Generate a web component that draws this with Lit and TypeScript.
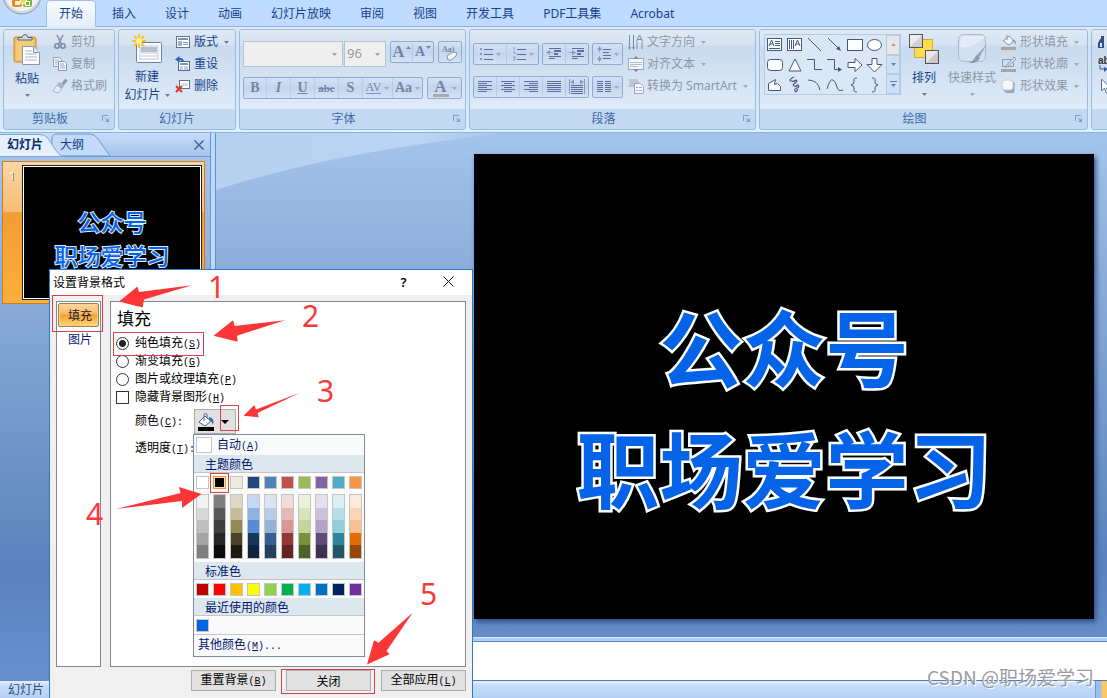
import { LitElement, html, svg, css, nothing, type TemplateResult } from "lit";
import { customElement, state } from "lit/decorators.js";
import { classMap } from "lit/directives/class-map.js";
import { styleMap } from "lit/directives/style-map.js";

const icon = (w: number, h: number, body: unknown) =>
  html`<svg class="ic" width=${w} height=${h} viewBox="0 0 ${w} ${h}" fill="none" aria-hidden="true">${body}</svg>`;

const caret = html`<svg class="caret" width="5" height="3" viewBox="0 0 5 3" aria-hidden="true"><path d="M0 0h5L2.5 3z" fill="currentColor" /></svg>`;

const lines = (xs: number[][], color = "#5b6f9b") =>
  xs.map(([x, y, w]) => svg`<rect x=${x} y=${y} width=${w} height="1" fill=${color} />`);

const I = {
  paste: icon(30, 32, svg`
    <rect x="2" y="3" width="22" height="25" rx="2" fill="#f0bd5e" stroke="#c48a35"/>
    <rect x="4" y="6" width="18" height="20" fill="#f8d68c" opacity=".6"/>
    <path d="M6 6V3.500h4Q10.500 .6 13 .6t3 2.900h4V6z" fill="#d5d9e0" stroke="#59606e"/>
    <path d="M10.500 12.500h11l6 6v12h-17z" fill="#fff" stroke="#8796ad"/>
    <path d="M21.500 12.500v6h6" fill="#dfe7f2" stroke="#8796ad"/>
    <path d="M13 17h7M13 20h12M13 23h12M13 26h12" stroke="#a9b6cb"/>`),
  cut: icon(16, 16, svg`
    <path d="M5 1l4.500 9M11 1L6.500 10" stroke="#8794ab" stroke-width="1.600"/>
    <circle cx="5" cy="12" r="2.200" stroke="#7788a8" stroke-width="1.500"/><circle cx="11" cy="12" r="2.200" stroke="#7788a8" stroke-width="1.500"/>`),
  copy: icon(16, 16, svg`
    <path d="M1.500 1.500h6l2 2v7h-8z" fill="#eef3fa" stroke="#97a6bf"/><path d="M3 4h4M3 6h5M3 8h5" stroke="#aab7cc"/>
    <path d="M6.500 5.500h6l2 2v7h-8z" fill="#f6f9fd" stroke="#8495b2"/><path d="M8 8h4M8 10h5M8 12h5" stroke="#97a6bf"/>`),
  brush: icon(16, 16, svg`
    <path d="M14.500 1.500l-4 5" stroke="#8a99b3" stroke-width="3"/>
    <path d="M7 4l5 4-2 3L5 7z" fill="#a7b4c9"/><path d="M5 7L9.500 11 6 15 1 13z" fill="#e8edf4" stroke="#a8b4c8"/>`),
  newSlide: icon(32, 30, svg`
    <rect x="5.500" y="8.500" width="25" height="20" rx="1" fill="#fbfcfe" stroke="#6d7f9c"/>
    <rect x="8" y="11" width="20" height="15" fill="#dfe4ec"/><rect x="10" y="13" width="16" height="5" fill="#b5bfce"/>
    <path d="M10 20.500h16M10 23.500h16" stroke="#fff"/>
    <path d="M8 0v14M1 7h14M3 2l10 10M13 2L3 12" stroke="#f4c51c" stroke-width="1.800"/><circle cx="8" cy="7" r="3" fill="#fff3a0"/>`),
  layout: icon(16, 16, svg`
    <rect x="1.500" y="2.500" width="13" height="11" fill="#fff" stroke="#5f7494"/><rect x="3" y="4" width="10" height="2" fill="#7f93b3"/>
    <rect x="3" y="7" width="4" height="5" fill="#9fb0c9"/><path d="M8 8.500h5M8 10.500h5" stroke="#7f93b3"/>`),
  reset: icon(16, 16, svg`
    <rect x="3.500" y="5.500" width="11" height="9" fill="#fff" stroke="#4f678f"/><rect x="5" y="7" width="8" height="2" fill="#7f93b3"/>
    <path d="M5 11h3M9 11h4M5 13h3M9 13h4" stroke="#8fa1be"/>
    <path d="M8 5.500Q7.500 2.500 4 3" stroke="#2d62b8" stroke-width="2"/><path d="M0 3.500L4.500 0v6.500z" fill="#2d62b8"/>`),
  remove: icon(16, 16, svg`
    <rect x="4.500" y="2.500" width="10" height="8" fill="#fff" stroke="#5f7494"/><rect x="7" y="5" width="6" height="3" fill="#d5dce8"/>
    <path d="M1 8l6 6M7 8l-6 6" stroke="#dd3a26" stroke-width="2"/>`),
  eraser: icon(18, 18, svg`
    <text x="1" y="9" font-size="8" font-weight="700" fill="#7684a3" font-family="Liberation Serif">Aa)</text>
    <path d="M6 13l6-4 4 1-1 3-5 4H7z" fill="#f2f5fa" stroke="#8492ac"/>`),
  bullets: icon(14, 14, svg`<path d="M1 1h2v2H1zM1 6h2v2H1zM1 11h2v2H1z" fill="#8b9ab8"/>${lines([[5, 2, 9], [5, 7, 9], [5, 12, 9]])}`),
  numbers: icon(14, 14, svg`<path d="M2 0v3M1 5h2v2M1 10h2v3H1" stroke="#8b9ab8"/>${lines([[5, 2, 9], [5, 7, 9], [5, 12, 9]])}`),
  outdent: icon(16, 14, svg`${lines([[3, 1, 12], [8, 3, 7], [8, 4, 7], [8, 6, 4], [8, 7, 4], [3, 9, 12], [3, 11, 6]])}<path d="M0 5.500L4 3v5zM4 5h3v1H4z" fill="#8c9fc4"/>`),
  indent: icon(16, 14, svg`${lines([[3, 1, 12], [8, 3, 7], [8, 4, 7], [8, 6, 4], [8, 7, 4], [3, 9, 12], [3, 11, 6]])}<path d="M7 5.500L3 3v5zM0 5h3v1H0z" fill="#8c9fc4"/>`),
  spacing: icon(14, 16, svg`<path d="M2.500 1v5M2.500 10v5" stroke="#8b9ab8"/><path d="M0 4l2.500-4L5 4zM0 12l2.500 4L5 12z" fill="#8b9ab8"/>${lines([[6, 3, 8], [6, 6, 6], [6, 9, 8], [6, 12, 8]])}`),
  left: icon(16, 14, lines([[1, 1, 14], [1, 3, 9], [1, 5, 14], [1, 7, 9], [1, 9, 14], [1, 11, 9]])),
  center: icon(16, 14, lines([[1, 1, 14], [4, 3, 8], [1, 5, 14], [4, 7, 8], [1, 9, 14], [4, 11, 8]])),
  right: icon(16, 14, lines([[1, 1, 14], [6, 3, 9], [1, 5, 14], [6, 7, 9], [1, 9, 14], [6, 11, 9]])),
  justify: icon(16, 14, lines([[1, 1, 14], [1, 3, 14], [1, 5, 14], [1, 7, 14], [1, 9, 14], [1, 11, 14]])),
  distribute: icon(16, 16, svg`<path d="M.5 0v15M15.500 0v15" stroke="#8b9ab8"/><path d="M1 3l4-2.500v5zM15 3l-4-2.500v5z" fill="#8b9ab8"/>${lines([[2, 6, 12], [2, 8, 12], [2, 10, 12], [2, 12, 12], [2, 14, 12]])}`),
  columns: icon(14, 14, lines([[0, 1, 6], [0, 3, 6], [0, 5, 6], [0, 7, 6], [0, 9, 6], [0, 11, 6], [8, 1, 6], [8, 3, 6], [8, 5, 6], [8, 7, 6], [8, 9, 6], [8, 11, 6]])),
  direction: icon(16, 16, svg`<path d="M1.500 1v14M5.500 1v14M9 8.500V15M14 8.500V15" stroke="#7b8aa9"/><path d="M0 13h3l-1.500 3zM4 13h3l-1.500 3z" fill="#7b8aa9"/>
    <path d="M8.500 7.500L11.500 1l3 6.500M9.500 5.500h4" stroke="#7b8aa9"/>`),
  align: icon(16, 16, svg`<rect x=".5" y="2.500" width="15" height="11" fill="#f4f7fc" stroke="#9aa8bf"/><path d="M2 6.500h12M2 8.500h12M2 10.500h8" stroke="#b2bdd0"/><path d="M8 0l3 3H5zM8 16l3-3H5z" fill="#7b8aa9"/>`),
  smart: icon(16, 16, svg`<path d="M0 1h9l3 4-3 4H0l2-4z" fill="#bcc6d5"/><path d="M6.500 5.500h6l3 3v7h-9z" fill="#f4f7fc" stroke="#9aa8bf"/><path d="M8 9.500h2M11 9.500h3M8 12.500h2M11 12.500h3" stroke="#97a6bf"/>`),
  arrange: icon(32, 32, svg`
    <rect x="6.500" y="6.500" width="18" height="18" fill="#ffdc4e" stroke="#d9ab32"/>
    <rect x="1.500" y="1.500" width="13" height="13" fill="#d0d0d0" stroke="#555"/><path d="M2 2h12L2 14z" fill="#ececec"/>
    <rect x="17.500" y="17.500" width="13" height="13" fill="#cacaca" stroke="#555"/><path d="M18 18h12L18 30z" fill="#e8e8e8"/>`),
  quick: icon(32, 32, svg`
    <rect x="2.500" y="1.500" width="27" height="27" rx="5" fill="#d3e0f0" stroke="#a9b9d0"/><path d="M4 14Q16 16 28 5V3H5z" fill="#e3ecf7"/>
    <path d="M31 11L20 23l3 2z" fill="#9aa8be"/><path d="M20 22l4 3q-3 6-11 5 5-2 7-8z" fill="#8d9bb3"/>`),
  fill: icon(18, 16, svg`<path d="M3 7l6-5 5 5-5 4z" fill="#f3f6fb" stroke="#8896b0"/><path d="M7 6V1" stroke="#8896b0"/><path d="M12 5q5 1 4 6-1-3-4-4z" fill="#8ba0c6"/><rect x="1" y="13" width="15" height="3" fill="#a6a6a6"/>`),
  outline: icon(18, 16, svg`<path d="M2.500 3.500h9M2.500 3.500v7h11v-4" stroke="#8896b0"/><path d="M5 11L14 1l2 2-9 8z" fill="#d9e1ee" stroke="#8896b0"/><rect x="1" y="13" width="15" height="3" fill="#a6a6a6"/>`),
  effect: icon(18, 16, svg`<path d="M3 12l3 3h8l1-9-2-3z" fill="#98a8c4"/><rect x="2" y="2" width="11" height="10" rx="3" fill="#f4f7fc" stroke="#c1ccdd"/>`),
  bucket: icon(18, 18, svg`<path d="M2 9l6-6 6 5-6 5z" fill="#fff" stroke="#4a5f80"/><path d="M7 8V1.500q0-1 1.500-1T10 2v3" stroke="#5b7091"/><path d="M12 4q6 1 4 8-1-4-4-5z" fill="#3a68b5"/><rect x="1" y="14" width="16" height="4" fill="#000"/>`),
  launch: html`<svg width="8" height="8" viewBox="0 0 8 8" fill="none" aria-hidden="true"><path d="M.5 6V.5H6M3 3l3 3" stroke="#7f9cc8"/><path d="M7 3v4H3z" fill="#7f9cc8"/></svg>`,
};

const st = "#42597f";
const SHAPES: [string, TemplateResult][] = [
  ["文本框", svg`<rect x="1.500" y="2.500" width="14" height="12" fill="#fff" stroke=${st}/><path d="M3 10l2.500-6L8 10M4 8h3M9 5.500h5M9 7.500h5M9 9.500h5M3 12.500h11" stroke=${st}/>`],
  ["竖排文本框", svg`<rect x="1.500" y="2.500" width="14" height="12" fill="#fff" stroke=${st}/><path d="M3.500 4v9M5.500 4v9M7.500 4v9M9 10l2.500-6L14 10M10 8h3" stroke=${st}/>`],
  ["直线", svg`<path d="M2 2l13 13" stroke=${st}/>`],
  ["箭头", svg`<path d="M2 2l11 11" stroke=${st}/><path d="M15 15l-5-2 3-3z" fill=${st}/>`],
  ["矩形", svg`<rect x="1.500" y="3.500" width="15" height="11" fill="#fff" stroke=${st}/>`],
  ["椭圆", svg`<ellipse cx="8.500" cy="9" rx="7" ry="5.500" fill="#fff" stroke=${st}/>`],
  ["圆角矩形", svg`<rect x="1.500" y="3.500" width="15" height="11" rx="3" fill="#fff" stroke=${st}/>`],
  ["三角形", svg`<path d="M9 3l6 12H3z" fill="#fff" stroke=${st}/>`],
  ["肘形连接符", svg`<path d="M1 3.500h7.500v10H16" stroke=${st}/>`],
  ["肘形箭头", svg`<path d="M1 3.500h7.500v10H13" stroke=${st}/><path d="M16 13.500L12 11v5z" fill=${st}/>`],
  ["右箭头", svg`<path d="M2 6.500h7v-4l7 6.500-7 6.500v-4H2z" fill="#fff" stroke=${st}/>`],
  ["下箭头", svg`<path d="M6 2.500h5v6h5L8.500 16 1 8.500h5z" fill="#fff" stroke=${st}/>`],
  ["任意多边形", svg`<path d="M2.500 14.500v-7l7-4-1 5 3-1 3 3v4z" fill="#fff" stroke=${st}/>`],
  ["自由曲线", svg`<path d="M8 1q-6 3-3 4t5-1q2 1-1 3t-1 3 4-1q2 2-1 3t-2 3 3-2" stroke=${st} stroke-width="1.200"/>`],
  ["弧形", svg`<path d="M2 4q10 0 12 10" stroke=${st}/>`],
  ["曲线", svg`<path d="M1 13Q4 2 7 4t4 7 6 3" stroke=${st}/>`],
  ["左大括号", svg`<path d="M11 2Q7 2 8 5t-3 4q4 1 3 4t3 3" stroke=${st}/>`],
  ["右大括号", svg`<path d="M6 2q4 0 3 3t3 4q-4 1-3 4t-3 3" stroke=${st}/>`],
];

const THEME: string[][] = [
  ["#ffffff", "#f2f2f2", "#d8d8d8", "#bfbfbf", "#a5a5a5", "#7f7f7f"],
  ["#000000", "#7f7f7f", "#595959", "#3f3f3f", "#262626", "#0c0c0c"],
  ["#eeece1", "#ddd9c3", "#c4bd97", "#938953", "#494429", "#1d1b10"],
  ["#1f497d", "#c6d9f0", "#8db3e2", "#548dd4", "#17365d", "#0f243e"],
  ["#4f81bd", "#dbe5f1", "#b8cce4", "#95b3d7", "#366092", "#244061"],
  ["#c0504d", "#f2dcdb", "#e5b9b7", "#d99694", "#953734", "#632423"],
  ["#9bbb59", "#ebf1dd", "#d7e3bc", "#c3d69b", "#76923c", "#4f6128"],
  ["#8064a2", "#e5e0ec", "#ccc1d9", "#b2a2c7", "#5f497a", "#3f3151"],
  ["#4bacc6", "#dbeef3", "#b7dde8", "#92cddc", "#31859b", "#205867"],
  ["#f79646", "#fdeada", "#fbd5b5", "#fac08f", "#e36c09", "#974806"],
];
const STANDARD = ["#c00000", "#ff0000", "#ffc000", "#ffff00", "#92d050", "#00b050", "#00b0f0", "#0070c0", "#002060", "#7030a0"];

const base = css`
  * { box-sizing: border-box; }
  button, select, input { font: inherit; color: inherit; margin: 0; }
  button { border: 0; padding: 0; background: none; text-align: center; white-space: nowrap; }
  svg { display: block; flex: none; }
`;

@customElement("ribbon-bar")
export class RibbonBar extends LitElement {
  static styles = [base, css`
    :host { display: block; font: 12px/16px "Noto Sans", "Noto Sans CJK SC", sans-serif; color: #15428b; }
    .top { display: flex; height: 27px; background: #bfdbff; border-bottom: 1px solid #8db2e3; }
    .orb { width: 47px; height: 26px; overflow: hidden; }
    .tabs { display: flex; gap: 5px; padding-top: 1px; }
    .tab { height: 25px; padding: 0 12px; }
    .tab.on { height: 26px; background: linear-gradient(#f7fbff, #e3eefb); border-radius: 4px 4px 0 0; box-shadow: 0 0 0 1px #9dbfe8; clip-path: inset(-1px -1px 0 -1px); }
    .ribbon { display: flex; gap: 3px; padding: 2px 0 2px 3px; overflow: hidden; background: linear-gradient(#dbe9f9, #cfe2f8 20%, #d8ebfa 90%, #d9f4ff); border-bottom: 1px solid #8fb3de; }
    .group { display: flex; flex-direction: column; flex: none; border: 1px solid #9dbcdd; border-radius: 3px; background: #c2d9f1; overflow: hidden; }
    .g1 { width: 112px; } .g2 { width: 118px; } .g3 { width: 227px; } .g4 { width: 287px; } .g5 { width: 329px; } .g6 { width: 120px; }
    .body { display: flex; height: 79px; background: linear-gradient(#dfe9f5, #d5e2f2 15px, #c9daee 16px, #dce8f6 70px, #e0ebf8); }
    .title { display: flex; align-items: center; height: 20px; color: #3e6aaa; }
    .title span { flex: 1; text-align: center; }
    .launch { width: 18px; height: 16px; padding-left: 6px; }
    .caret { color: #66809f; }
    .big { display: flex; flex-direction: column; align-items: center; }
    .big .lab { line-height: 18px; margin-top: 4px; }
    .big .caret { margin-top: 6px; }
    .g1 .big { width: 46px; padding-top: 4px; }
    .g2 .big { width: 56px; padding-top: 4px; }
    .inl { display: inline-flex; align-items: center; gap: 4px; }
    .big .inl .caret { margin-top: 0; }
    .col { display: flex; flex-direction: column; padding-top: 1px; }
    .cmd { display: flex; align-items: center; height: 22px; gap: 3px; }
    .cmd .caret { margin-left: 3px; }
    .g1 .cmd { margin-left: 2px; }
    .off { color: #8d96a6; }
    .off .caret, .box .caret { color: #9ba9bf; }
    .rows { display: flex; flex-direction: column; padding-left: 3px; }
    .g3 .rows { padding-top: 11px; gap: 10px; }
    .g4 .rows { padding-top: 13px; gap: 11px; }
    .row { display: flex; gap: 3px; }
    .g3 .row { gap: 4px; }
    .combos { display: flex; gap: 1px; height: 26px; }
    .combo { position: relative; display: flex; }
    select { appearance: none; height: 26px; border: 1px solid #b4c4d8; border-radius: 0; background: #efefef; color: #9a9a9a; padding: 0 0 2px 2px; font-size: 13px; opacity: 1; }
    .name { width: 100px; } .size { width: 42px; }
    .combo .caret { position: absolute; right: 6px; top: 12px; color: #9aa3b2; }
    .box { display: flex; height: 22px; border: 1px solid #8eabd0; border-radius: 2px; background: linear-gradient(#d3e1f4, #c4d5ee 50%, #d4e2f5); }
    .box button { display: flex; align-items: center; justify-content: center; gap: 3px; width: 24px; color: #7684a3; border-left: 1px solid #b7cbe5; }
    .box button:first-child { border-left: 0; width: 22px; }
    .g4 .box button { width: 23px; }
    .g4 .box button:first-child { width: 22px; }
    .box.pair button { width: 21px; gap: 1px; }
    .box .wide { width: 30px; }
    .g3 .box.w33 button { width: 33px; }
    .g4 .box.w33 button, .g4 .box.w33 button:first-child { width: 32px; }
    .g4 .box.w31 button:first-child { width: 29px; }
    .serif { font: bold 14px/18px "Liberation Serif", serif; }
    .serif.strike { font-size: 11px; text-decoration: line-through; }
    .serif.it { font-style: italic; } .serif.un { text-decoration: underline; }
    .serif.sp { font: 12px/11px "Liberation Serif", serif; border-bottom: 1px solid #7f95bf; }
    .serif.xl { font-size: 17px; }
    .bar { width: 16px; border-bottom: 3px solid #a9a9a9; line-height: 15px; }
    .g4 .col { margin-left: 5px; }
    .gal { display: flex; margin: 4px 0 0 4px; width: 137px; height: 61px; border: 1px solid #b5cae5; background: #dbe7f5; }
    .cells { display: grid; grid-template-columns: repeat(6, 20px); grid-auto-rows: 20px; flex: 1; }
    .cells button { display: grid; place-items: center; }
    .scroll { display: flex; flex-direction: column; width: 14px; }
    .scroll button { flex: 1; display: grid; place-items: center; border: 1px solid #b5cae5; background: #cfe0f5; color: #5a7cae; }
    .scroll button:first-child { background: #e8e6e6; color: #a3a3a3; }
    .g5 .big { width: 46px; padding-top: 3px; }
    .g5 .big.q { width: 50px; }
    .g5 .col { margin-left: 3px; }
    .g5 .cmd { gap: 2px; }
    .g5 .cmd .caret { margin-left: 4px; }
    .g6 .col { padding-left: 6px; }
  `];

  private title(text: string, launch = true) {
    return html`<div class="title"><span>${text}</span>${launch ? html`<button class="launch" aria-label="${text}选项">${I.launch}</button>` : nothing}</div>`;
  }

  private cmd(ic: unknown, text: string, off = false, drop = false) {
    return html`<button class=${classMap({ cmd: true, off })}>${ic}<span>${text}</span>${drop ? caret : nothing}</button>`;
  }

  render() {
    const tabs = ["开始", "插入", "设计", "动画", "幻灯片放映", "审阅", "视图", "开发工具", "PDF工具集", "Acrobat"];
    return html`
      <div class="top">
        <div class="orb"><svg width="44" height="16" viewBox="0 0 44 16" fill="none">
          <circle cx="22" cy="-5" r="19" fill="#cfd5de" stroke="#8a97ab"/><circle cx="22" cy="-6" r="17" fill="#f1f3f6"/>
          <rect x="12" y="-6" width="10" height="13" rx="2" fill="#ef8b27"/><rect x="23" y="-6" width="9" height="13" rx="2" fill="#7cb83c"/>
          <rect x="15" y="1" width="5" height="4" fill="#fff3d0"/><rect x="20.500" y="-2.500" width="6" height="6" rx="1" fill="#f7d64a" stroke="#fff"/><rect x="25.500" y="1.500" width="4" height="4" fill="#7cb83c" stroke="#fff"/>
        </svg></div>
        <nav class="tabs">${tabs.map((t, i) => html`<button class=${classMap({ tab: true, on: i === 0 })}>${t}</button>`)}</nav>
      </div>
      <div class="ribbon">
        <section class="group g1"><div class="body">
          <button class="big">${I.paste}<span class="lab">粘贴</span>${caret}</button>
          <div class="col">${this.cmd(I.cut, "剪切", true)}${this.cmd(I.copy, "复制", true)}${this.cmd(I.brush, "格式刷", true)}</div>
        </div>${this.title("剪贴板")}</section>

        <section class="group g2"><div class="body">
          <button class="big">${I.newSlide}<span class="lab">新建<br /><span class="inl">幻灯片${caret}</span></span></button>
          <div class="col">${this.cmd(I.layout, "版式", false, true)}${this.cmd(I.reset, "重设")}${this.cmd(I.remove, "删除")}</div>
        </div>${this.title("幻灯片", false)}</section>

        <section class="group g3"><div class="body"><div class="rows">
          <div class="row">
            <div class="combos">
              <div class="combo"><select class="name" aria-label="字体" disabled><option></option></select>${caret}</div>
              <div class="combo"><select class="size" aria-label="字号" disabled><option>96</option></select>${caret}</div>
            </div>
            <div class="box pair"><button class="serif xl" aria-label="增大字号">A<svg width="5" height="12" viewBox="0 0 5 12"><path d="M0 3h5L2.500 0z" fill="#7684a3"/></svg></button><button class="serif" aria-label="减小字号">A<svg width="5" height="12" viewBox="0 0 5 12"><path d="M0 0h5L2.500 3z" fill="#7684a3"/></svg></button></div>
            <div class="box"><button aria-label="清除格式">${I.eraser}</button></div>
          </div>
          <div class="row">
            <div class="box">
              <button class="serif">B</button><button class="serif it">I</button><button class="serif un">U</button>
              <button class="serif strike">abc</button><button class="serif">S</button>
              <button class="wide"><span class="serif sp">AV</span>${caret}</button><button class="wide"><span class="serif">Aa</span>${caret}</button>
            </div>
            <div class="box w33"><button><span class="serif xl bar">A</span>${caret}</button></div>
          </div>
        </div></div>${this.title("字体")}</section>

        <section class="group g4"><div class="body">
          <div class="rows">
            <div class="row">
              <div class="box w33"><button aria-label="项目符号">${I.bullets}${caret}</button><button aria-label="编号">${I.numbers}${caret}</button></div>
              <div class="box"><button aria-label="减少缩进">${I.outdent}</button><button aria-label="增加缩进">${I.indent}</button></div>
              <div class="box w31"><button aria-label="行距">${I.spacing}${caret}</button></div>
            </div>
            <div class="row">
              <div class="box"><button aria-label="左对齐">${I.left}</button><button aria-label="居中">${I.center}</button><button aria-label="右对齐">${I.right}</button><button aria-label="两端对齐">${I.justify}</button><button aria-label="分散对齐">${I.distribute}</button></div>
              <div class="box w31"><button aria-label="分栏">${I.columns}${caret}</button></div>
            </div>
          </div>
          <div class="col">${this.cmd(I.direction, "文字方向", true, true)}${this.cmd(I.align, "对齐文本", true, true)}${this.cmd(I.smart, "转换为 SmartArt", true, true)}</div>
        </div>${this.title("段落")}</section>

        <section class="group g5"><div class="body">
          <div class="gal">
            <div class="cells">${SHAPES.map(([n, s]) => html`<button aria-label=${n}>${icon(18, 18, s)}</button>`)}</div>
            <div class="scroll">
              <button aria-label="上一行"><svg width="5" height="3" viewBox="0 0 5 3"><path d="M0 3h5L2.500 0z" fill="currentColor"/></svg></button>
              <button aria-label="下一行">${caret}</button>
              <button aria-label="更多"><svg width="7" height="6" viewBox="0 0 7 6"><path d="M0 0h7v1H0zM1 3h5L3.500 6z" fill="currentColor"/></svg></button>
            </div>
          </div>
          <button class="big">${I.arrange}<span class="lab">排列</span>${caret}</button>
          <button class="big q off">${I.quick}<span class="lab">快速样式</span>${caret}</button>
          <div class="col">${this.cmd(I.fill, "形状填充", true, true)}${this.cmd(I.outline, "形状轮廓", true, true)}${this.cmd(I.effect, "形状效果", true, true)}</div>
        </div>${this.title("绘图")}</section>

        <section class="group g6"><div class="body"><div class="col">
          <button class="cmd" aria-label="查找">${icon(16, 16, svg`<path d="M2 5h4v9H0V9zM9 5h4l2 4v5H9zM3 2h3v3H3zM9 2h3v3H9z" fill="#2f4f86"/><rect x="2" y="9" width="2" height="4" fill="#dce6f5"/>`)}</button>
          <button class="cmd" aria-label="替换">${icon(16, 16, svg`<text x="0" y="8" font-size="10" font-weight="700" fill="#333" font-family="Liberation Sans">ab</text><path d="M2 9v4h6" stroke="#2f5fae"/><path d="M10 13l-4-2v5z" fill="#2f5fae"/>`)}</button>
          <button class="cmd" aria-label="选择">${icon(16, 16, svg`<path d="M3.500 1v12l3-3 2 5 2-1-2-4h4z" fill="#fff" stroke="#5b6f93"/>`)}</button>
        </div></div><div class="title"></div></section>
      </div>`;
  }
}

@customElement("format-dialog")
export class FormatDialog extends LitElement {
  @state() private fillMode = 0;

  static styles = [base, css`
    :host { display: flex; flex-direction: column; border: 1px solid #2b7cc4; border-bottom: 0; background: #f0f0f0; font: 12px/16px "Noto Sans CJK SC", sans-serif; color: #000; }
    .m { font: 10px/16px "Liberation Mono", monospace; }
    .bar { display: flex; align-items: center; height: 25px; flex: none; padding: 0 1px 2px 3px; background: #fff; }
    .bar span { flex: 1; }
    .bar button { display: grid; place-items: center; width: 45px; height: 23px; font: 600 13px/16px "Noto Sans", sans-serif; }
    .body { display: flex; gap: 9px; height: 373px; flex: none; padding: 6px 6px 0 6px; }
    .list { display: flex; flex-direction: column; width: 45px; height: 366px; border: 1px solid #828790; background: #fff; padding: 1px; color: #0a1a6a; }
    .list button { height: 24px; padding-left: 3px; }
    .list .on { border: 1px solid #a08050; border-radius: 2px; background: linear-gradient(#fbd9a4, #f8b95e 45%, #f5a12c 50%, #fdd77c); box-shadow: inset 0 0 0 1px #fbd08a; color: #1a1a3a; }
    .panel { flex: 1; height: 366px; border: 1px solid #828790; background: #fff; padding: 5px; }
    h2 { margin: 0 0 6px 1px; font-size: 17px; line-height: 21px; font-weight: 400; }
    .opt { display: flex; align-items: center; height: 18px; gap: 6px; }
    .opt input { appearance: none; width: 13px; height: 13px; border: 1px solid #333; background: #fff; }
    .opt input[type="radio"] { border-radius: 50%; }
    .opt input[type="radio"]:checked { background: radial-gradient(circle, #222 0 3px, #fff 4px); }
    .field { display: flex; align-items: center; height: 27px; padding-left: 19px; }
    .field.first { margin-top: 2px; }
    .field .lab { width: 59px; white-space: nowrap; }
    .pick { display: flex; align-items: center; gap: 6px; width: 42px; height: 25px; padding-left: 2px; border: 1px solid #adadad; background: #e1e1e1; }
    .foot { display: flex; justify-content: flex-end; gap: 10px; padding: 2px 6px 0 0; }
    .foot button { width: 85px; height: 21px; border: 1px solid #adadad; background: #e1e1e1; }
  `];

  private opt(i: number, text: string, key: string) {
    return html`<label class="opt"><input type="radio" name="fill" .checked=${this.fillMode === i} @change=${() => (this.fillMode = i)} /><span>${text}<span class="m">(<u>${key}</u>)</span></span></label>`;
  }

  render() {
    return html`
      <div class="bar"><span>设置背景格式</span>
        <button aria-label="帮助">?</button>
        <button aria-label="关闭窗口"><svg width="11" height="11" viewBox="0 0 11 11"><path d="M.5.5l10 10M10.500.5l-10 10" stroke="#111"/></svg></button>
      </div>
      <div class="body">
        <div class="list"><button class="on">填充</button><button>图片</button></div>
        <div class="panel">
          <h2>填充</h2>
          ${this.opt(0, "纯色填充", "S")}${this.opt(1, "渐变填充", "G")}${this.opt(2, "图片或纹理填充", "P")}
          <label class="opt"><input type="checkbox" /><span>隐藏背景图形<span class="m">(<u>H</u>)</span></span></label>
          <div class="field first"><span class="lab">颜色<span class="m">(<u>C</u>):</span></span>
            <button class="pick" aria-label="颜色">${I.bucket}<svg width="8" height="4" viewBox="0 0 8 4"><path d="M0 0h8L4 4z"/></svg></button></div>
          <div class="field"><span class="lab">透明度<span class="m">(<u>T</u>):</span></span></div>
        </div>
      </div>
      <div class="foot">
        <button>重置背景<span class="m">(<u>B</u>)</span></button><button>关闭</button><button>全部应用<span class="m">(<u>L</u>)</span></button>
      </div>`;
  }
}

@customElement("color-menu")
export class ColorMenu extends LitElement {
  static styles = [base, css`
    :host { display: block; border: 1px solid #7f8ca0; background: #fafafa; font: 12px/16px "Noto Sans CJK SC", sans-serif; color: #00156e; }
    .m { font: 10px/16px "Liberation Mono", monospace; }
    .auto { display: flex; align-items: center; gap: 5px; width: 100%; height: 20px; padding-left: 2px; }
    .auto i { width: 16px; height: 16px; border: 1px solid #c5c5c5; background: #fff; }
    h3 { margin: 0; height: 18px; padding-left: 11px; background: #dde7ee; border-bottom: 1px solid #c5c5c5; font-size: 12px; line-height: 17px; font-weight: 400; }
    .line { display: flex; gap: 4px; padding: 3px 2px 2px; }
    .sw { width: 13px; height: 13px; border: 1px solid #c5c5c5; }
    .sw.on { border-color: #f29436; box-shadow: inset 0 0 0 1px #ffe294; }
    .shades { display: flex; gap: 4px; padding: 3px 2px; }
    .stack { display: flex; flex-direction: column; width: 13px; height: 65px; border: 1px solid #c5c5c5; }
    .stack button { flex: 1; }
    .more { display: block; width: 100%; height: 22px; padding-left: 4px; border-top: 1px solid #c5c5c5; text-align: left; }
  `];

  private sw(c: string, on = false) {
    return html`<button class=${classMap({ sw: true, on })} aria-label=${c} style=${styleMap({ backgroundColor: c })}></button>`;
  }

  render() {
    return html`
      <button class="auto"><i></i><span>自动<span class="m">(<u>A</u>)</span></span></button>
      <h3>主题颜色</h3>
      <div class="line">${THEME.map((c, i) => this.sw(c[0], i === 1))}</div>
      <div class="shades">${THEME.map((c) => html`<div class="stack">${c.slice(1).map((s) => html`<button aria-label=${s} style=${styleMap({ backgroundColor: s })}></button>`)}</div>`)}</div>
      <h3>标准色</h3>
      <div class="line">${STANDARD.map((c) => this.sw(c))}</div>
      <h3>最近使用的颜色</h3>
      <div class="line">${this.sw("#0563e8")}</div>
      <button class="more">其他颜色<span class="m">(<u>M</u>)...</span></button>`;
  }
}

@customElement("app-root")
export class AppRoot extends LitElement {
  static styles = [base, css`
    :host { display: flex; flex-direction: column; position: relative; height: 100vh; overflow: hidden; font: 12px/16px "Noto Sans", "Noto Sans CJK SC", sans-serif; color: #15428b; }
    .work { display: flex; flex: 1; min-height: 0; }
    .pane { width: 210px; flex: none; background: linear-gradient(#a9c6ee, #8cadd9 28%, #5b82bd 80%, #6690cd); }
    .ptabs { position: relative; display: flex; align-items: center; height: 24px; background: linear-gradient(#c9ddf8, #a4c3ec); border-bottom: 1px solid #6f97cc; }
    .ptabs svg.bg { position: absolute; left: 0; top: 0; }
    .ptabs button { position: relative; height: 23px; }
    .ptabs .a { padding: 0 7px; font-weight: 700; color: #0b2a6e; }
    .ptabs .b { padding: 0 10px; }
    .ptabs .x { margin-left: auto; padding: 0 6px; }
    .item { display: flex; margin: 4px 5px 0 2px; height: 143px; padding: 4px 3px; border: 1px solid #d07c1c; background: linear-gradient(#fbd6a6, #f7bc74 35%, #f39d35 36%, #fbaf3c); }
    .no { width: 17px; padding: 2px 0 0 3px; font-size: 10px; color: #fff; text-shadow: 1px 1px 0 #666; }
    .slide, .thumb { display: flex; flex-direction: column; align-items: center; justify-content: center; background: #000; color: #0563e8; font-family: "Noto Sans CJK SC", sans-serif; font-weight: 700; white-space: nowrap; paint-order: stroke fill; }
    .thumb { flex: 1; border: 1px solid #fff; outline: 1px solid #222; padding-top: 10px; font-size: 23px; line-height: 34px; font-weight: 500; -webkit-text-stroke: 2px #dfeaff; }
    .split { width: 6px; flex: none; background: #b8dbff; border-right: 1px solid #5f93d0; border-left: 1px solid #6f97cc; }
    .main { display: flex; flex-direction: column; flex: 1; min-width: 0; }
    .stage { position: relative; display: flex; flex: 1; padding: 21px 13px 18px 258px; background: linear-gradient(#a5c4ed, #8cadd9 28%, #5b82bd 85%, #648cc7); }
    .curve { position: absolute; left: 0; top: 0; }
    .slide { position: relative; flex: 1; padding-top: 38px; font-size: 83px; line-height: 121px; -webkit-text-stroke: 5px #fff; box-shadow: 2px 3px 5px #33507f; }
    .nsplit { height: 5px; background: #abcdf8; border-top: 1px solid #d5e8ff; border-bottom: 1px solid #5f8ac2; }
    .notes { height: 39px; background: #fff; border-bottom: 1px solid #4f7cb8; }
    .status { display: flex; align-items: center; height: 17px; flex: none; padding-left: 8px; background: linear-gradient(#e3efff, #c5dbf8 30%, #b4d0f5); overflow: hidden; color: #2a4b85; }
    .status .view { margin-left: auto; width: 12px; height: 17px; border-left: 1px solid #6f97cc; background: linear-gradient(90deg, #9cc0ee 5px, #fbc867 6px); }
    .dialog { position: absolute; left: 49px; top: 269px; bottom: 0; width: 424px; }
    .menu { position: absolute; left: 193px; top: 434px; width: 172px; }
    .marks { position: absolute; left: 0; top: 0; pointer-events: none; }
    .num { position: absolute; font-size: 30px; line-height: 30px; color: #fa3a3a; }
    .wm { position: absolute; right: 13px; bottom: 6px; font: 19px/30px "Noto Sans CJK SC", sans-serif; color: #999ca1; text-shadow: 1px 1px 0 #fff; }
  `];

  render() {
    const nums: [string, number, number][] = [["1", 208, 272], ["2", 302, 301], ["3", 317, 376], ["4", 86, 499], ["5", 420, 579]];
    const title = ["公众号", "职场爱学习"];
    return html`
      <ribbon-bar></ribbon-bar>
      <div class="work">
        <aside class="pane">
          <div class="ptabs">
            <svg class="bg" width="120" height="24" viewBox="0 0 120 24" fill="none">
              <path d="M52 20V6q0-5 5-5h33q5 0 8 5l12 17H55z" fill="#c3daf8" stroke="#6f97cc"/>
              <path d="M-1 1.500h41q5 0 8 4l8 12q4 6 8 6H-1z" fill="#e6f0fd" stroke="#7fa5d8"/>
            </svg>
            <button class="a">幻灯片</button><button class="b">大纲</button>
            <button class="x" aria-label="关闭"><svg width="10" height="10" viewBox="0 0 10 10"><path d="M.5.5l9 9M9.500.5l-9 9" stroke="#3c65a0" stroke-width="1.500"/></svg></button>
          </div>
          <div class="item"><span class="no">1</span><div class="thumb">${title.map((t) => html`<div>${t}</div>`)}</div></div>
        </aside>
        <div class="split"></div>
        <main class="main">
          <div class="stage">
            <svg class="curve" width="300" height="58" viewBox="0 0 300 58"><defs><linearGradient id="g"><stop stop-color="#b7d0ee"/><stop offset=".7" stop-color="#bcd4f4"/><stop offset="1" stop-color="#a5c4ed"/></linearGradient></defs><path d="M0 0h290Q112 20 0 57z" fill="url(#g)"/></svg>
            <div class="slide">${title.map((t) => html`<div>${t}</div>`)}</div>
          </div>
          <div class="nsplit"></div>
          <div class="notes"></div>
        </main>
      </div>
      <footer class="status"><span>幻灯片</span><span class="view"></span></footer>
      <format-dialog class="dialog"></format-dialog>
      <color-menu class="menu"></color-menu>
      <svg class="marks" width="480" height="698" viewBox="0 0 480 698" fill="none">
        <g stroke="#d8404c">
          <rect x="52.500" y="295.500" width="50" height="36"/><rect x="113.500" y="332.500" width="90" height="23"/>
          <rect x="220.500" y="405.500" width="18" height="25"/><rect x="210.500" y="473.500" width="18" height="19"/>
          <rect x="281.500" y="669.500" width="93" height="24"/>
        </g>
        <g fill="#fc3636">
          <path d="M119 301.500L137.500 286.500 139 292 192 285.300 144 299.500 142.500 307.500z"/>
          <path d="M213.500 335.700L233 320.300 234.700 326 285 320.300 237 335.700 237.700 341.700z"/>
          <path d="M243.500 415.700L254.300 405 256 409.500 300 392.700 257.500 413 258.700 417.300z"/>
          <path d="M201.500 494L179 487 180.500 493 116 509 182 501 182 508z"/>
          <path d="M367 664.500L374 640.300 378.500 642.700 412.700 612.700 386.500 651 389.500 654.300z"/>
        </g>
      </svg>
      ${nums.map(([n, x, y]) => html`<span class="num" style=${styleMap({ left: `${x}px`, top: `${y}px` })}>${n}</span>`)}
      <span class="wm">CSDN @职场爱学习</span>`;
  }
}
